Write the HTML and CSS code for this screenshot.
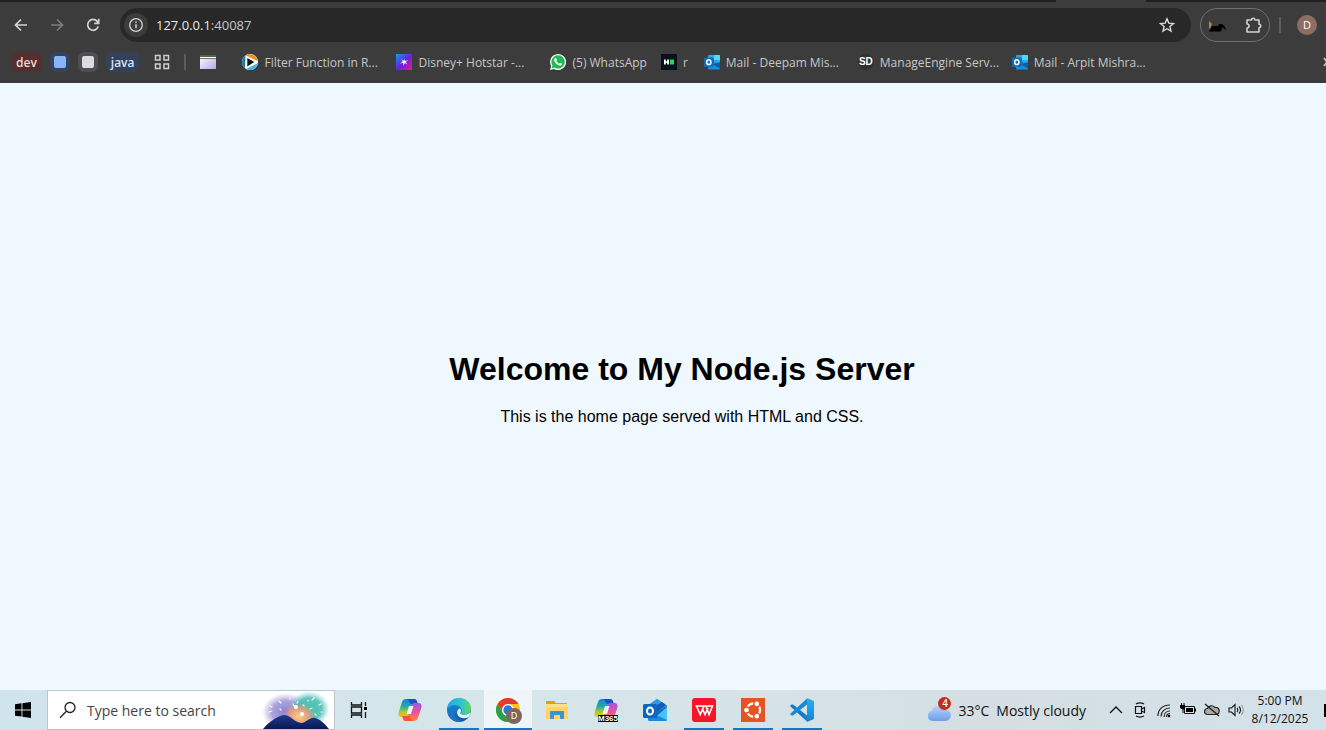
FILE: index.html
```html
<!DOCTYPE html>
<html lang="en">
<head>
<meta charset="utf-8">
<title>Welcome to My Node.js Server</title>
<link rel="stylesheet" href="styles.css">
</head>
<body>
<svg class="defs" aria-hidden="true">
  <defs>
    <symbol id="outlook" viewBox="0 0 16 16">
      <path d="M5 1h10a1 1 0 0 1 1 1v8H4V2a1 1 0 0 1 1-1z" fill="#28a8ea"/>
      <path d="M10 1h5a1 1 0 0 1 1 1v4h-6z" fill="#50d9ff"/>
      <path d="M4 5h6v6H4z" fill="#0364b8"/>
      <path d="M4 10l6-2 6 1v5.500a1 1 0 0 1-1 1H5a1 1 0 0 1-1-1z" fill="#1490df"/>
      <path d="M16 8.500v6L8 10z" fill="#0a5ea8"/>
      <rect x="0" y="3.500" width="9.500" height="9.500" rx="1" fill="#0f6cbd"/>
      <ellipse cx="4.800" cy="8.200" rx="2.100" ry="2.400" fill="none" stroke="#fff" stroke-width="1.500"/>
    </symbol>
    <linearGradient id="starGrad" x1="0" y1="0" x2="1" y2="1"><stop offset="0" stop-color="#00a3ff"/><stop offset=".5" stop-color="#6a22d8"/><stop offset="1" stop-color="#f5108c"/></linearGradient>
    <linearGradient id="copA" x1="0" y1="0" x2="0" y2="1"><stop offset="0" stop-color="#1683e0"/><stop offset=".4" stop-color="#22a7a8"/><stop offset=".7" stop-color="#a4c83a"/><stop offset="1" stop-color="#ffc400"/></linearGradient>
    <linearGradient id="copB" x1="0" y1="0" x2="0" y2="1"><stop offset="0" stop-color="#9a55ea"/><stop offset=".5" stop-color="#e7559b"/><stop offset="1" stop-color="#ff8a3c"/></linearGradient>
    <symbol id="copilot" viewBox="0 0 24 24">
      <path d="M8 1h8c1.700 0 2.500 1 3 2.600l.7 2.400H14l-3 10c-.6 2-1.500 3-3.500 3H3.500C1 19 0 17 .6 14.500L4 4c.7-2 2-3 4-3z" fill="url(#copA)"/>
      <path d="M8 1h8c1.700 0 2.500 1 3 2.600l.7 2.400H14c-1.500 0-2-.4-2.500-2C11 2 10 1 8 1z" fill="#1c50c5"/>
      <path d="M16 23H8c-1.700 0-2.500-1-3-2.600L4.300 18H10l3-10c.6-2 1.500-3 3.500-3h4c2.500 0 3.500 2 2.900 4.500L20 20c-.7 2-2 3-4 3z" fill="url(#copB)"/>
      <path d="M16 23H8c-1.700 0-2.500-1-3-2.600L4.300 18H10c1.500 0 2 .4 2.500 2 .5 2 1.500 3 3.500 3z" fill="#f2592f"/>
      <path d="M11 8h4.500l-2.500 8H8.500z" fill="#eef5f8"/>
    </symbol>
    <linearGradient id="edgeA" x1="0" y1="0" x2="1" y2="0"><stop offset="0" stop-color="#2aa4e4"/><stop offset=".55" stop-color="#2bc3d2"/><stop offset="1" stop-color="#63da58"/></linearGradient>
    <linearGradient id="edgeB" x1="0" y1="0" x2="0" y2="1"><stop offset="0" stop-color="#1b9de2"/><stop offset="1" stop-color="#0f56a8"/></linearGradient>
    <linearGradient id="cloud" x1="0" y1="0" x2="0" y2="1"><stop offset="0" stop-color="#b8d4fa"/><stop offset="1" stop-color="#6f9fe8"/></linearGradient>
    <linearGradient id="purple" x1="0" y1="0" x2="1" y2="1"><stop offset="0" stop-color="#fff"/><stop offset="1" stop-color="#b9a5ea"/></linearGradient>
    <linearGradient id="vs" x1="0" y1="0" x2="0" y2="1"><stop offset="0" stop-color="#2fb0f2"/><stop offset="1" stop-color="#1283d0"/></linearGradient>
    <radialGradient id="glowA"><stop offset="0" stop-color="#8a7fd0"/><stop offset=".6" stop-color="#9a8fd6" stop-opacity=".8"/><stop offset="1" stop-color="#b5a8e0" stop-opacity="0"/></radialGradient>
    <radialGradient id="glowB"><stop offset="0" stop-color="#36c9b0"/><stop offset=".6" stop-color="#45b8b5" stop-opacity=".85"/><stop offset="1" stop-color="#7fd0d0" stop-opacity="0"/></radialGradient>
    <radialGradient id="glowC"><stop offset="0" stop-color="#ffd07a"/><stop offset=".6" stop-color="#f59a78" stop-opacity=".8"/><stop offset="1" stop-color="#f08a70" stop-opacity="0"/></radialGradient>
    <linearGradient id="hill" x1="0" y1="0" x2="0" y2="1"><stop offset="0" stop-color="#1d3a90"/><stop offset="1" stop-color="#0a184e"/></linearGradient>
  </defs>
</svg>

<header class="browser">
  <div class="tabstrip"><span class="tabstrip-left"></span><span class="tabstrip-gap"></span><span class="tabstrip-right"></span></div>
  <div class="toolbar">
    <div class="nav">
      <button class="nav-button" aria-label="Back"><svg width="16" height="16" viewBox="0 0 16 16"><path d="M14 8H3M8 2.500L2.500 8 8 13.500" fill="none" stroke="#d3d3d3" stroke-width="1.700"/></svg></button>
      <button class="nav-button" aria-label="Forward"><svg width="16" height="16" viewBox="0 0 16 16"><path d="M2 8h11M8 2.500L13.500 8 8 13.500" fill="none" stroke="#7c7c7c" stroke-width="1.700"/></svg></button>
      <button class="nav-button" aria-label="Reload"><svg width="16" height="16" viewBox="0 0 16 16"><path d="M13.200 9.500A5.400 5.400 0 1 1 12.200 4.400L13.500 6M13.700 1.800V6.300H9.200" fill="none" stroke="#d3d3d3" stroke-width="1.700"/></svg></button>
    </div>
    <div class="omnibox">
      <button class="site-info" aria-label="Site information"><svg width="16" height="16" viewBox="0 0 16 16"><circle cx="8" cy="8" r="6.300" fill="none" stroke="#d3d3d3" stroke-width="1.300"/><path d="M8 7.200v4M8 4.400v1.500" stroke="#d3d3d3" stroke-width="1.500"/></svg></button>
      <span class="address"><span class="host">127.0.0.1</span>:40087</span>
      <button class="star" aria-label="Bookmark this tab"><svg width="16" height="16" viewBox="0 0 16 16"><path d="M8 1.800l1.800 4.300 4.700.4-3.600 3 1.100 4.600L8 11.700l-4 2.400 1.100-4.600-3.600-3 4.700-.4z" fill="none" stroke="#dadada" stroke-width="1.400"/></svg></button>
    </div>
    <div class="extensions">
      <button class="plain" aria-label="Extension"><svg width="18" height="16" viewBox="0 0 18 16"><path d="M1 4l3 3-2 5-1-1z" fill="#b9805a"/><path d="M1 14.500l3-5.500h6l1-2h3l2.500 2 1.500 4-2-1-1.500-2-1.500 4.500z" fill="#000"/></svg></button>
      <button class="plain" aria-label="Extensions"><svg width="18" height="18" viewBox="0 0 18 18"><path d="M2 4h4.500a1.700 1.700 0 0 1 3.400 0H14v4.300a1.700 1.700 0 0 1 0 3.400V16H2v-4a2 2 0 0 0 0-4z" fill="none" stroke="#d0d0d0" stroke-width="1.600" stroke-linejoin="round"/></svg></button>
    </div>
    <span class="divider"></span>
    <button class="avatar" aria-label="Profile">D</button>
  </div>
  <nav class="bookmarks" aria-label="Bookmarks">
    <div class="groups">
      <button class="group group-red">dev</button>
      <button class="group group-blue" aria-label="Blue group"><i class="square square-blue"></i></button>
      <button class="group group-gray" aria-label="Gray group"><i class="square square-gray"></i></button>
      <button class="group group-navy">java</button>
    </div>
    <button class="plain apps" aria-label="Apps"><svg width="16" height="16" viewBox="0 0 16 16"><path d="M1.500 1.500h4.500v4.500H1.500zM10 1.500h4.500v4.500H10zM1.500 10h4.500v4.500H1.500zM10 10h4.500v4.500H10z" fill="none" stroke="#cfcfcf" stroke-width="1.500"/></svg></button>
    <span class="divider divider-small"></span>
    <a class="bookmark bookmark-bare" href="#" aria-label="Page"><svg width="16" height="16" viewBox="0 0 16 16"><path d="M0 1h16v14H0z" fill="url(#purple)"/><path d="M0 1h16v2H0z" fill="#53664d"/><path d="M0 3h16v1H0z" fill="#fff"/><path d="M0 4h16v1H0z" fill="#6d7a60"/></svg></a>
    <a class="bookmark bookmark-fixed" href="#"><svg width="16" height="16" viewBox="0 0 16 16"><circle cx="8" cy="8" r="8" fill="#fff"/><path d="M3 1.800A8 8 0 0 1 15.800 7L5 2z" fill="#f58a22"/><path d="M3.500 1.500A8 8 0 0 0 3 14.300z" fill="#187f9a"/><path d="M4 15A8 8 0 0 0 16 9z" fill="#4bb5e0"/><path d="M5.300 4l7 4-7 4.500z" fill="#111"/></svg><span class="label">Filter Function in R...</span></a>
    <a class="bookmark bookmark-fixed" href="#"><svg width="16" height="16" viewBox="0 0 16 16"><path d="M0 0h16v16H0z" fill="url(#starGrad)"/><path d="M8.300 4.500l.4 2.500 3.800-.8L9.500 8l2 2.500-2.800-1.600L7.500 12l-.3-3.200L4 9.500l2.800-1.900L5 5l2.800 1.700z" fill="#fff"/></svg><span class="label">Disney+ Hotstar -...</span></a>
    <a class="bookmark bookmark-snug" href="#"><svg width="16" height="16" viewBox="0 0 16 16"><path d="M0 16l1.100-4.100A8 8 0 1 1 4 14.900z" fill="#fff"/><path d="M1.500 14.500l.9-3A6.700 6.700 0 1 1 4.500 13.600z" fill="#20b954"/><path d="M5 4.200l1-.2 1 2-.7 1c.7 1.300 1.600 2.100 2.900 2.700l1-1 2 1c-.1 1.500-1.400 2.200-2.700 1.900C6.900 10.900 4.900 8.900 4.200 6.500 4 5.500 4.400 4.600 5 4.200z" fill="#fff"/></svg><span class="label">(5) WhatsApp</span></a>
    <a class="bookmark" href="#"><svg width="16" height="16" viewBox="0 0 16 16"><path d="M0 0h16v16H0z" fill="#07101b"/><path d="M3 5.500h1.800v1.700h1.400V5.500H8v5H6.200V8.800H4.800v1.700H3z" fill="#fff"/><path d="M9 5.500h4v5H9z" fill="#23d763"/></svg><span class="label">r</span></a>
    <a class="bookmark bookmark-fixed" href="#"><svg width="16" height="16"><use href="#outlook"/></svg><span class="label">Mail - Deepam Mis...</span></a>
    <a class="bookmark bookmark-fixed" href="#"><span class="sd">SD</span><span class="label">ManageEngine Serv...</span></a>
    <a class="bookmark bookmark-fixed" href="#"><svg width="16" height="16"><use href="#outlook"/></svg><span class="label">Mail - Arpit Mishra...</span></a>
    <button class="plain overflow" aria-label="More bookmarks"><svg width="10" height="10" viewBox="0 0 10 10"><path d="M1 1l3 4-3 4M5 1l3 4-3 4" fill="none" stroke="#cfcfcf" stroke-width="1.500"/></svg></button>
  </nav>
</header>

<main class="page">
  <h1 class="title">Welcome to My Node.js Server</h1>
  <p class="intro">This is the home page served with HTML and CSS.</p>
</main>

<footer class="taskbar">
  <button class="start" aria-label="Start"><svg width="16" height="16" viewBox="0 0 16 16"><path d="M0 2.200l6.500-.9v6.200H0zM7.400 1.200L16 0v7.500H7.400zM0 8.400h6.500v6.200L0 13.700zM7.400 8.400H16V16l-8.600-1.200z"/></svg></button>
  <label class="search">
    <svg class="search-glass" width="18" height="18" viewBox="0 0 18 18"><circle cx="11" cy="6.500" r="5" fill="none" stroke="#222" stroke-width="1.300"/><path d="M7.400 10.200L1 16.700" stroke="#222" stroke-width="1.300"/></svg>
    <input class="search-input" type="text" placeholder="Type here to search" aria-label="Type here to search">
    <svg class="fireworks" width="68" height="38" viewBox="0 0 68 38"><ellipse cx="24" cy="21" rx="24" ry="19" fill="url(#glowA)"/><ellipse cx="47" cy="18" rx="21" ry="18" fill="url(#glowB)"/><ellipse cx="37" cy="25" rx="17" ry="13" fill="url(#glowC)"/><g stroke="#f4ffe0" stroke-width="1.200" stroke-linecap="round"><path d="M7 21l3-1M8 15l2 1M17 10l2 2M28 7l0 1M36 11l-1 1M42 15l-1-1M52 7l-2 2M59 13l-2 1M60 21l-1 0M46 9l0 1M18 18l1 1M54 24l-1-1M48 18l2-1M31 13l1 2"/></g><g fill="#fff"><circle cx="34" cy="16" r="2"/><circle cx="40" cy="23" r="2"/></g><path d="M1 38c5-6 10-10 17-13 4-2 7-1 10 1 4 3 8 6 12 6 5-1 8-6 13-5 5 1 10 6 14 11z" fill="url(#hill)"/></svg>
  </label>
  <button class="task-view" aria-label="Task View"><svg width="18" height="18" viewBox="0 0 18 18"><path d="M1.500 1v3h10V1M1.500 17v-3h10v3M1.500 6h10v6h-10zM15.500 1v4M15.500 11v6" fill="none" stroke="#111" stroke-width="1.300"/><path d="M14 6h3v3h-3z"/></svg></button>
  <div class="apps-list">
    <button class="app" aria-label="Copilot"><svg width="24" height="24"><use href="#copilot"/></svg></button>
    <button class="app app-open" aria-label="Edge"><svg width="24" height="24" viewBox="0 0 24 24"><circle cx="12" cy="12" r="12" fill="url(#edgeB)"/><path d="M0 11C1 4 6 0 12 0c7 0 12 5 12 10.500 0 4-3 6.500-6.500 6.500-2.500 0-4.500-1-4-2.200 1.700-1.500 1.500-5-1.500-6.600C8 6 2 7 0 11z" fill="url(#edgeA)"/><path d="M12 8.400c-3 .6-5 3.300-5 6.600 0 4 3.500 7.500 8 8.200C8.500 25 2 21 1.200 15 .7 10 7 7 12 8.400z" fill="#1977c4"/><path d="M12.800 10.500c1.700 1 1.500 3.200.4 4.300-.6 1.200 1.800 2.200 4.300 2.200 2.300 0 4.300-.9 5.500-2.400l.7.400c-.5 1.800-1.200 3-2.300 4.200-4.500 2.300-11.200.8-11.200-4.600 0-2 1-3.600 2.600-4.100z" fill="#e6f3f8"/></svg></button>
    <button class="app app-active" aria-label="Chrome"><svg width="24" height="24" viewBox="0 0 24 24"><circle cx="12" cy="12" r="12" fill="#fbc116"/><path d="M1.600 6A12 12 0 0 1 22.400 6H12a6 6 0 0 0-5.200 9z" fill="#e33b2e"/><path d="M1.600 6A12 12 0 0 0 12 24l5.200-9A6 6 0 0 1 6.800 15z" fill="#27a14b"/><circle cx="12" cy="12" r="6" fill="#fff"/><circle cx="12" cy="12" r="4.700" fill="#2479e6"/></svg><span class="profile-badge">D</span></button>
    <button class="app" aria-label="File Explorer"><svg width="24" height="24" viewBox="0 0 24 24"><path d="M1 3h8l2 2h11v5H1z" fill="#dd9f20"/><path d="M1 6h22v15H1z" fill="#ffd666"/><path d="M5 13h14v8h-4v-4H9v4H5z" fill="#3c94d8"/><path d="M1 6h22v3H1z" fill="#ffe08a"/></svg></button>
    <button class="app" aria-label="Microsoft 365 Copilot"><svg width="24" height="24"><use href="#copilot"/></svg><span class="m365">M365</span></button>
    <button class="app" aria-label="Outlook"><svg width="24" height="24" viewBox="0 0 24 24"><path d="M5 8l9-7 10 7v13a2 2 0 0 1-2 2H7a2 2 0 0 1-2-2z" fill="#1267b8"/><path d="M5 7l9-6 10 7-10 6z" fill="#2b9ae5"/><path d="M9 10l10-6 4 3-10 8z" fill="#175ab5"/><path d="M24 9v12a2 2 0 0 1-2 2H8z" fill="#48c4f2"/><path d="M5 13l19 9-2 1H7a2 2 0 0 1-2-2z" fill="#1a8bda"/><rect x="0" y="6" width="14" height="14" rx="1.500" fill="#0c66bd"/><ellipse cx="7" cy="13" rx="3" ry="3.500" fill="none" stroke="#fff" stroke-width="2"/></svg></button>
    <button class="app app-open" aria-label="WPS Office"><svg width="24" height="24" viewBox="0 0 24 24"><rect width="24" height="24" rx="3" fill="#fa1428"/><path d="M3.500 8h8.500l-3.800 8.500L4.500 8M10.500 11l2.500 5.500L16 10M12 8h2l3 8.500L20.500 8H15" fill="none" stroke="#fff" stroke-width="1.600"/></svg></button>
    <button class="app app-open" aria-label="Ubuntu"><svg width="24" height="24" viewBox="0 0 24 24"><path d="M0 0h24v24H0z" fill="#e55422"/><circle cx="12.500" cy="12" r="6.600" fill="none" stroke="#fff" stroke-width="2.200"/><g fill="#fff" stroke="#e55422" stroke-width="1.300"><circle cx="5.500" cy="12" r="3"/><circle cx="15.800" cy="5.800" r="3"/><circle cx="15.800" cy="18.200" r="3"/></g></svg></button>
    <button class="app app-open" aria-label="Visual Studio Code"><svg width="24" height="24" viewBox="0 0 24 24"><path d="M1.500 6.500L0 8l17 15.500V17.500L3 6.500z" fill="#1679c4"/><path d="M17 .5L0 16l1.500 1.500H3l14-11z" fill="#198ad4"/><path d="M17 0l7 3v18l-7 3z" fill="url(#vs)"/></svg></button>
  </div>
  <div class="tray">
    <button class="weather">
      <span class="weather-icon"><svg width="24" height="26" viewBox="0 0 24 26"><path d="M5.500 24a5 5 0 0 1-.5-9.900 7 7 0 0 1 13-1.500A5.700 5.700 0 0 1 18.300 24z" fill="url(#cloud)"/></svg><span class="count">4</span></span>
      <span>33°C</span><span>Mostly cloudy</span>
    </button>
    <div class="status">
      <button class="plain" aria-label="Show hidden icons"><svg width="16" height="16" viewBox="0 0 16 16"><path d="M2 11l6-6 6 6" fill="none" stroke="#111" stroke-width="1.300"/></svg></button>
      <button class="plain" aria-label="Meet Now"><svg width="16" height="16" viewBox="0 0 16 16"><path d="M3.500 4.500h6v7h-6zM9.500 7l3-1.500v5l-3-1.500M4 2c2.500-1.300 5.500-1.300 8 0M4 14c2.500 1.300 5.500 1.300 8 0" fill="none" stroke="#111" stroke-width="1.200"/></svg></button>
      <button class="plain" aria-label="Network"><svg width="16" height="16" viewBox="0 0 16 16"><g fill="none" stroke="#222" stroke-width="1.200"><path d="M2 14C2 7 7 3 14 3M5 14.500c0-5 4-8.500 9-8.500M8 15c0-3.500 2.500-6 6-6"/><path d="M10.500 15c0-2 1.500-3.500 3.500-3.500"/></g><circle cx="13" cy="14" r="1.300"/></svg></button>
      <button class="plain" aria-label="Battery"><svg width="16" height="16" viewBox="0 0 16 16"><path d="M4.500 4.500h10v7h-10z" fill="none" stroke="#111"/><path d="M6 6h7v4H6zM15 6.500h1v3h-1zM0 3h5v3L3.500 7.500V11h-1V7.500L0 6zM1 1h1v2H1zM3.500 1h1v2h-1z"/></svg></button>
      <button class="plain" aria-label="OneDrive"><svg width="16" height="16" viewBox="0 0 16 16"><path d="M3.500 12.500a3 3 0 0 1 0-6c.7-3 5.500-3.800 7.200-1A3.600 3.600 0 0 1 12.500 12.500z" fill="#aaa" stroke="#222" stroke-width="1.200"/><path d="M1 2l14 12" stroke="#222" stroke-width="1.400"/></svg></button>
      <button class="plain" aria-label="Volume"><svg width="16" height="16" viewBox="0 0 16 16"><path d="M1 6h2.500L7 2.500v11L3.500 10H1z" fill="none" stroke="#111" stroke-width="1.100"/><path d="M9 6c1 1 1 3 0 4M11 4.500c2 2 2 5 0 7" fill="none" stroke="#111" stroke-width="1.100"/><path d="M13.300 3c2.500 3 2.500 7 0 10" fill="none" stroke="#999" stroke-width="1.100"/></svg></button>
    </div>
    <div class="clock"><time>5:00 PM</time><time>8/12/2025</time></div>
    <span class="notice"></span>
  </div>
</footer>
</body>
</html>
```
FILE: styles.css
```css
* { box-sizing: border-box; }

body {
  margin: 0;
  min-height: 100vh;
  display: flex;
  flex-direction: column;
  overflow: hidden;
  background: #f0f8ff;
  font-family: "Noto Sans", "Open Sans", sans-serif;
}

svg { display: block; flex: none; }
.defs { position: absolute; width: 0; height: 0; }

button {
  margin: 0;
  padding: 0;
  border: 0;
  background: none;
  color: inherit;
  font: inherit;
}

.plain { display: flex; align-items: center; justify-content: center; }

/* Browser chrome */
.browser {
  background: #3c3c3c;
  color: #c7c7c7;
  font-family: "Open Sans", "Noto Sans", sans-serif;
  font-size: 12px;
}

.tabstrip { display: flex; height: 2px; }
.tabstrip-left { flex: 1; background: #202020; }
.tabstrip-gap { width: 90px; }
.tabstrip-right { width: 180px; background: #202020; }

.toolbar {
  display: flex;
  align-items: center;
  height: 46px;
  padding: 0 9px 0 3px;
}

.nav { display: flex; width: 117px; }
.nav-button {
  display: flex;
  align-items: center;
  justify-content: center;
  width: 36px;
  height: 34px;
}

.omnibox {
  display: flex;
  flex: 1;
  align-items: center;
  height: 34px;
  padding: 0 16px 0 4px;
  border-radius: 17px;
  background: #282828;
}
.site-info {
  display: flex;
  align-items: center;
  justify-content: center;
  width: 24px;
  height: 24px;
  border-radius: 50%;
  background: #3c3c3c;
}
.address { flex: 1; padding-left: 8px; font-size: 13px; }
.host { color: #e8e8e8; }

.extensions {
  display: flex;
  align-items: center;
  justify-content: space-between;
  width: 70px;
  height: 34px;
  margin-left: 9px;
  padding: 0 6px 0 7px;
  border: 1px solid #707070;
  border-radius: 17px;
}
.divider { width: 2px; height: 16px; margin: 0 16px 0 9px; background: #5c5c5c; }
.avatar {
  width: 20px;
  height: 20px;
  border-radius: 50%;
  background: #8d6e63;
  color: #fff;
  font-size: 11px;
  line-height: 20px;
}

.bookmarks {
  display: flex;
  align-items: center;
  height: 35px;
  padding: 0 0 7px 11px;
}
.groups { display: flex; gap: 8px; }
.group {
  display: flex;
  align-items: center;
  justify-content: center;
  min-width: 20px;
  height: 20px;
  border-radius: 6px;
  font-weight: 600;
}
.group-red { padding: 0 5px; background: #52302f; color: #f6d5d2; }
.group-blue { background: #35435c; }
.group-gray { background: #4f4f51; }
.group-navy { padding: 0 5px; background: #35415a; color: #d5e3fb; }
.square { width: 12px; height: 12px; border-radius: 2px; }
.square-blue { background: #8ab4f8; }
.square-gray { background: #dadce0; }
.apps { margin-left: 15px; }
.divider-small { margin: 0 14px; }

.bookmark {
  display: flex;
  align-items: center;
  gap: 6px;
  margin-right: 16px;
  color: inherit;
  text-decoration: none;
  white-space: nowrap;
}
.bookmark-bare { margin-right: 26px; }
.bookmark-snug { margin-right: 14px; }
.bookmark-fixed .label { width: 116px; }
.sd {
  width: 16px;
  border-radius: 8px;
  background: #303030;
  color: #fff;
  font: bold 10px/16px "Liberation Sans", sans-serif;
  text-align: center;
}
.overflow { margin: 0 -7px 0 auto; }

/* Page content */
.page {
  display: flex;
  flex: 1;
  flex-direction: column;
  align-items: center;
  justify-content: center;
  padding: 4px 0 0 38px;
  color: #000;
  font-family: "Liberation Sans", Arial, sans-serif;
  text-align: center;
}
.title { margin: 0; font-size: 32px; line-height: 36px; }
.intro { margin: 21px 0 0; font-size: 16px; line-height: 18px; }

/* Taskbar */
.taskbar {
  display: flex;
  height: 40px;
  background: linear-gradient(90deg, #d0e4ee, #d6e6ea 40%, #d5dfe3 75%, #d3e1ea);
  color: #111;
}
.start {
  display: flex;
  align-items: center;
  justify-content: center;
  width: 47px;
  padding-right: 1px;
}

.search {
  display: flex;
  align-items: center;
  width: 288px;
  padding: 0 4px 0 11px;
  border: 1px solid #bfc6cb;
  background: #fff;
}
.search-input {
  flex: 1;
  min-width: 0;
  padding: 0 0 0 10px;
  border: 0;
  background: none;
  font: 14px "Open Sans", "Noto Sans", sans-serif;
}
.search-input::placeholder { color: #444; opacity: 1; }

.task-view { display: flex; align-items: center; justify-content: center; width: 48px; }
.apps-list { display: flex; gap: 1px; padding-left: 3px; }
.app {
  position: relative;
  display: flex;
  align-items: center;
  justify-content: center;
  width: 48px;
}
.app-open::after, .app-active::after {
  content: "";
  position: absolute;
  right: 4px;
  bottom: 0;
  left: 4px;
  height: 2px;
  background: #0b78cc;
}
.app-active { background: #eff6f9; }
.app-active::after { right: 0; left: 0; }
.profile-badge {
  position: absolute;
  right: 10px;
  bottom: 6px;
  width: 16px;
  height: 16px;
  border-radius: 50%;
  background: #80665d;
  color: #fff;
  font-size: 9px;
  line-height: 16px;
}
.m365 {
  position: absolute;
  right: 12px;
  bottom: 8px;
  background: #000;
  color: #fff;
  font: bold 8px/7px "Liberation Sans", sans-serif;
}

.tray { display: flex; align-items: center; margin-left: auto; }
.weather {
  display: flex;
  align-items: center;
  gap: 7px;
  font-family: "Open Sans", "Noto Sans", sans-serif;
  font-size: 14px;
}
.weather-icon { position: relative; }
.count {
  position: absolute;
  top: 0;
  right: 0;
  width: 13px;
  height: 13px;
  border-radius: 50%;
  background: #c42b1c;
  color: #fff;
  font-size: 10px;
  font-weight: 600;
  line-height: 13px;
}
.status { display: flex; gap: 8px; margin-left: 22px; }
.clock {
  display: flex;
  flex-direction: column;
  width: 72px;
  font-family: "Open Sans", "Noto Sans", sans-serif;
  font-size: 12px;
  line-height: 18px;
  text-align: center;
  white-space: nowrap;
}
.notice { width: 2px; height: 13px; margin-left: 8px; background: #000; }
```
